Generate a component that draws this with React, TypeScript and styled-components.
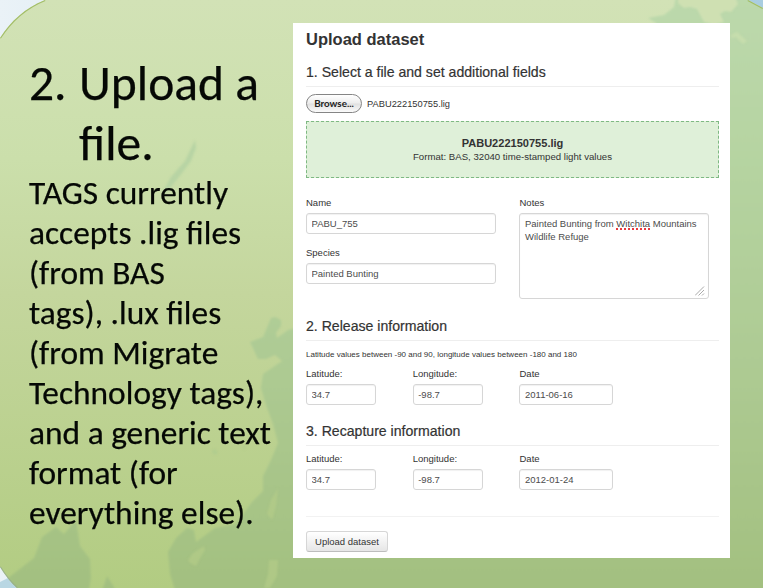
import React from "react";
import styled, { createGlobalStyle } from "styled-components";

const GlobalStyle = createGlobalStyle`
  *, *::before, *::after { box-sizing: border-box; }
  body { margin: 0; overflow: hidden; background: #e9f2f6; }
`;

const Slide = styled.main`
  position: relative;
  width: 763px;
  height: 588px;
  overflow: hidden;
  display: flex;
  align-items: flex-start;
  font-family: "Liberation Sans", Arial, sans-serif;
  color: #333;
`;

const Backdrop = styled.svg`
  position: absolute;
  inset: 0;
  width: 763px;
  height: 588px;
`;

const Copy = styled.section`
  position: relative;
  width: 293px;
  flex: none;
  padding: 53px 0 0 29px;
  font-family: Carlito, Calibri, Lato, sans-serif;
  color: #050805;
  -webkit-text-stroke: 0.25px #050805;
`;

const Title = styled.h1`
  margin: 0;
  display: grid;
  grid-template-columns: 50px 1fr;
  font-size: 49.5px;
  font-weight: 400;
  line-height: 60px;
  white-space: nowrap;
`;

const Body = styled.p`
  margin: 0;
  font-size: 33.4px;
  line-height: 40px;
  white-space: pre-line;
`;

const Card = styled.section`
  position: relative;
  width: 437px;
  height: 535px;
  margin-top: 23px;
  padding: 6px 11px 0 13px;
  background: #fff;
`;

const CardTitle = styled.h2`
  margin: 0;
  font-size: 16.5px;
  line-height: 20px;
  font-weight: 700;
`;

const SectionTitle = styled.h3<{ $top: number }>`
  margin: ${(p) => p.$top}px 0 0;
  height: 25px;
  border-bottom: 1.5px solid #eee;
  font-size: 14.1px;
  line-height: 20px;
  font-weight: 400;
  -webkit-text-stroke: 0.2px #333;
`;

const FilePicker = styled.div`
  display: flex;
  align-items: center;
  gap: 5px;
  margin-top: 7px;
  height: 19px;
  font-size: 9.3px;
`;

const BrowseButton = styled.button`
  width: 56px;
  height: 19px;
  padding: 0;
  border: 1.5px solid #858585;
  border-radius: 10px;
  background: linear-gradient(#fff, #ededed 48%, #e0e0e0 52%, #fbfbfb);
  font: 700 9.8px/15px Lato, sans-serif;
  color: #222;
`;

const Dropzone = styled.div`
  margin-top: 8px;
  height: 57px;
  padding-top: 14px;
  border: 1.4px dashed #7fb983;
  background: #dff0d9;
  text-align: center;
  font-size: 9.65px;
  line-height: 14px;

  strong {
    display: block;
    font-size: 11.05px;
  }
`;

const Columns = styled.div<{ $top: number }>`
  display: grid;
  grid-template-columns: 106.7px 106.8px 1fr;
  margin-top: ${(p) => p.$top}px;
`;

const Stack = styled.div`
  grid-column: span 2;
  display: flex;
  flex-direction: column;
  gap: 12px;
`;

const Field = styled.label`
  display: flex;
  flex-direction: column;
  gap: 3px;
  font-size: 9.5px;
  line-height: 14px;
`;

const control = `
  border: 1.4px solid #d6d6d6;
  border-radius: 3px;
  background: #fff;
  color: #4c4c4c;
  font-family: inherit;
  box-shadow: inset 0 1px 1px rgba(0, 0, 0, 0.06);
  outline: none;
`;

const Input = styled.input<{ $w: number }>`
  ${control}
  width: ${(p) => p.$w}px;
  height: 21px;
  padding: 0 4.5px 1px;
  font-size: 9.5px;
`;

const Notes = styled.div`
  ${control}
  position: relative;
  width: 190px;
  height: 86px;
  padding: 2.5px 4px 0 4.5px;
  font-size: 9.5px;
  line-height: 13.3px;
  white-space: pre;
`;

const Misspelled = styled.span`
  text-decoration: underline dotted #e8393f 1.5px;
  text-underline-offset: 1.5px;
  text-decoration-skip-ink: none;
`;

const Grip = styled.svg`
  position: absolute;
  right: 3px;
  bottom: 2px;
`;

const Hint = styled.p`
  margin: 8px 0 0;
  font-size: 8px;
  line-height: 12px;
  white-space: nowrap;
`;

const Divider = styled.hr`
  margin: 26px 0 13.5px;
  border: 0;
  border-top: 1.5px solid #f2f2f2;
`;

const Submit = styled.button`
  width: 82px;
  height: 20.5px;
  padding: 0 0 1px;
  border: 1px solid #d6d6d6;
  border-bottom-color: #bdbdbd;
  border-radius: 3px;
  background: linear-gradient(#fff, #e6e6e6);
  font: 9.5px "Liberation Sans", Arial, sans-serif;
  color: #333;
`;

function Landscape() {
  return (
    <Backdrop viewBox="0 0 763 588">
      <defs>
        <linearGradient id="leaf" x1="0" y1="0" x2="0" y2="1">
          <stop offset="0" stopColor="#d2e2b6" />
          <stop offset=".27" stopColor="#cbdfab" />
          <stop offset=".5" stopColor="#c4d69d" />
          <stop offset="1" stopColor="#b2cc82" />
        </linearGradient>
        <linearGradient id="land" gradientUnits="userSpaceOnUse" x1="0" y1="0" x2="0" y2="588">
          <stop offset="0" stopColor="#bcd9ac" />
          <stop offset=".3" stopColor="#b5d3a0" />
          <stop offset=".6" stopColor="#aecb94" />
          <stop offset="1" stopColor="#a3c080" />
        </linearGradient>
        <linearGradient id="sky" x1="0" x2="1">
          <stop offset="0" stopColor="#eaf2f7" />
          <stop offset="1" stopColor="#a9cde0" />
        </linearGradient>
        <filter id="soft"><feGaussianBlur stdDeviation="0.8" /></filter>
        <clipPath id="panel">
          <path d="M0 38C11 21 25 8 45 0H748L763 8V588H17Q8 580 0 567Z" />
        </clipPath>
      </defs>
      <rect width="763" height="588" fill="url(#sky)" />
      <path d="M0 588V582L8 578L17 588Z" fill="#b9d7e3" />
      <g clipPath="url(#panel)">
        <rect width="763" height="588" fill="url(#leaf)" />
        <g fill="url(#land)" filter="url(#soft)">
          <path d="M676 -5L674 7L664 15L648 18L656 23V35H722V600H775V-10Z" />
          <path d="M275 317L281 320L281 326L276 333L277 338L288 330L300 327V600H178L170 574L168 552L176 538L187 528L194 530L196 542L215 528L236 524L252 502L263 491L263 476L271 460L278 443L273 424L266 405L261 388L263 374L282 361L275 355L266 359L258 359L250 342L263 337L271 318Z" />
          <path d="M290 550H775V600H290Z" />
          <path d="M8 578L21 568L34 558L42 537L56 527L64 534L76 520L80 546L90 559L91 578L87 600H22Z" />
          <path d="M101 594L107 576L114 587L117 600Z" />
        </g>
        <g filter="url(#soft)">
          <path d="M195 140L196 148L191 161L179 177L166 193L162 193L171 177L185 161Z" fill="#b3d1a3" opacity=".8" />
          <path d="M81 204L84 203L83 206Z M214 449L218 452L215 455L212 452Z M242 445L246 447L244 450Z" fill="#aac98f" opacity=".6" />
          <path d="M678 -3L678 3L684 8L690 7L697 9L704 22L714 25L724 22L720 14L725 11L731 12L738 4L735 -3Z" fill="#cfe0b2" />
          <path d="M731 35L737 32L747 41L743 44L736 37L731 38Z" fill="#c9deae" opacity=".8" />
          <path d="M188 560L193 553L204 546L205 550L199 560L196 566L190 563Z M278 488L276 506L272 520L267 514L271 500Z M269 560H278L277 576L270 588H264L268 574Z" fill="#b6cd89" opacity=".65" />
        </g>
        <path d="M0 38C11 21 25 8 45 0M748 0L763 8" fill="none" stroke="#a2bd66" strokeWidth="2.2" />
        <path d="M0 567Q8 580 17 588" fill="none" stroke="#94aa8e" strokeWidth="2" opacity=".8" />
      </g>
    </Backdrop>
  );
}

type LocationProps = { date: string; top: number };

function LocationFields({ date, top }: LocationProps) {
  return (
    <Columns $top={top}>
      <Field>Latitude:<Input $w={70} defaultValue="34.7" /></Field>
      <Field>Longitude:<Input $w={70} defaultValue="-98.7" /></Field>
      <Field>Date<Input $w={94} defaultValue={date} /></Field>
    </Columns>
  );
}

export default function App() {
  return (
    <>
      <GlobalStyle />
      <Slide>
        <Landscape />
        <Copy>
          <Title><span>2.</span><span>Upload a<br />file.</span></Title>
          <Body>{`TAGS currently
accepts .lig files
(from BAS
tags), .lux files
(from Migrate
Technology tags),
and a generic text
format (for
everything else).`}</Body>
        </Copy>
        <Card>
          <CardTitle>Upload dataset</CardTitle>
          <SectionTitle $top={13}>1. Select a file and set additional fields</SectionTitle>
          <FilePicker>
            <BrowseButton>Browse...</BrowseButton>
            PABU222150755.lig
          </FilePicker>
          <Dropzone>
            <strong>PABU222150755.lig</strong>
            Format: BAS, 32040 time-stamped light values
          </Dropzone>
          <Columns $top={18}>
            <Stack>
              <Field>Name<Input $w={190} defaultValue="PABU_755" /></Field>
              <Field>Species<Input $w={190} defaultValue="Painted Bunting" /></Field>
            </Stack>
            <Field as="div">
              Notes
              <Notes>
                Painted Bunting from <Misspelled>Witchita</Misspelled> Mountains{"\n"}Wildlife Refuge
                <Grip width="10" height="10" viewBox="0 0 10 10" stroke="#aaa" strokeWidth="1">
                  <path d="M0 9.5L9 .5M3.5 9.5L9 4M7 9.5L9 7.5" fill="none" />
                </Grip>
              </Notes>
            </Field>
          </Columns>
          <SectionTitle $top={17}>2. Release information</SectionTitle>
          <Hint>Latitude values between -90 and 90, longitude values between -180 and 180</Hint>
          <LocationFields date="2011-06-16" top={6} />
          <SectionTitle $top={16}>3. Recapture information</SectionTitle>
          <LocationFields date="2012-01-24" top={6} />
          <Divider />
          <Submit>Upload dataset</Submit>
        </Card>
      </Slide>
    </>
  );
}
